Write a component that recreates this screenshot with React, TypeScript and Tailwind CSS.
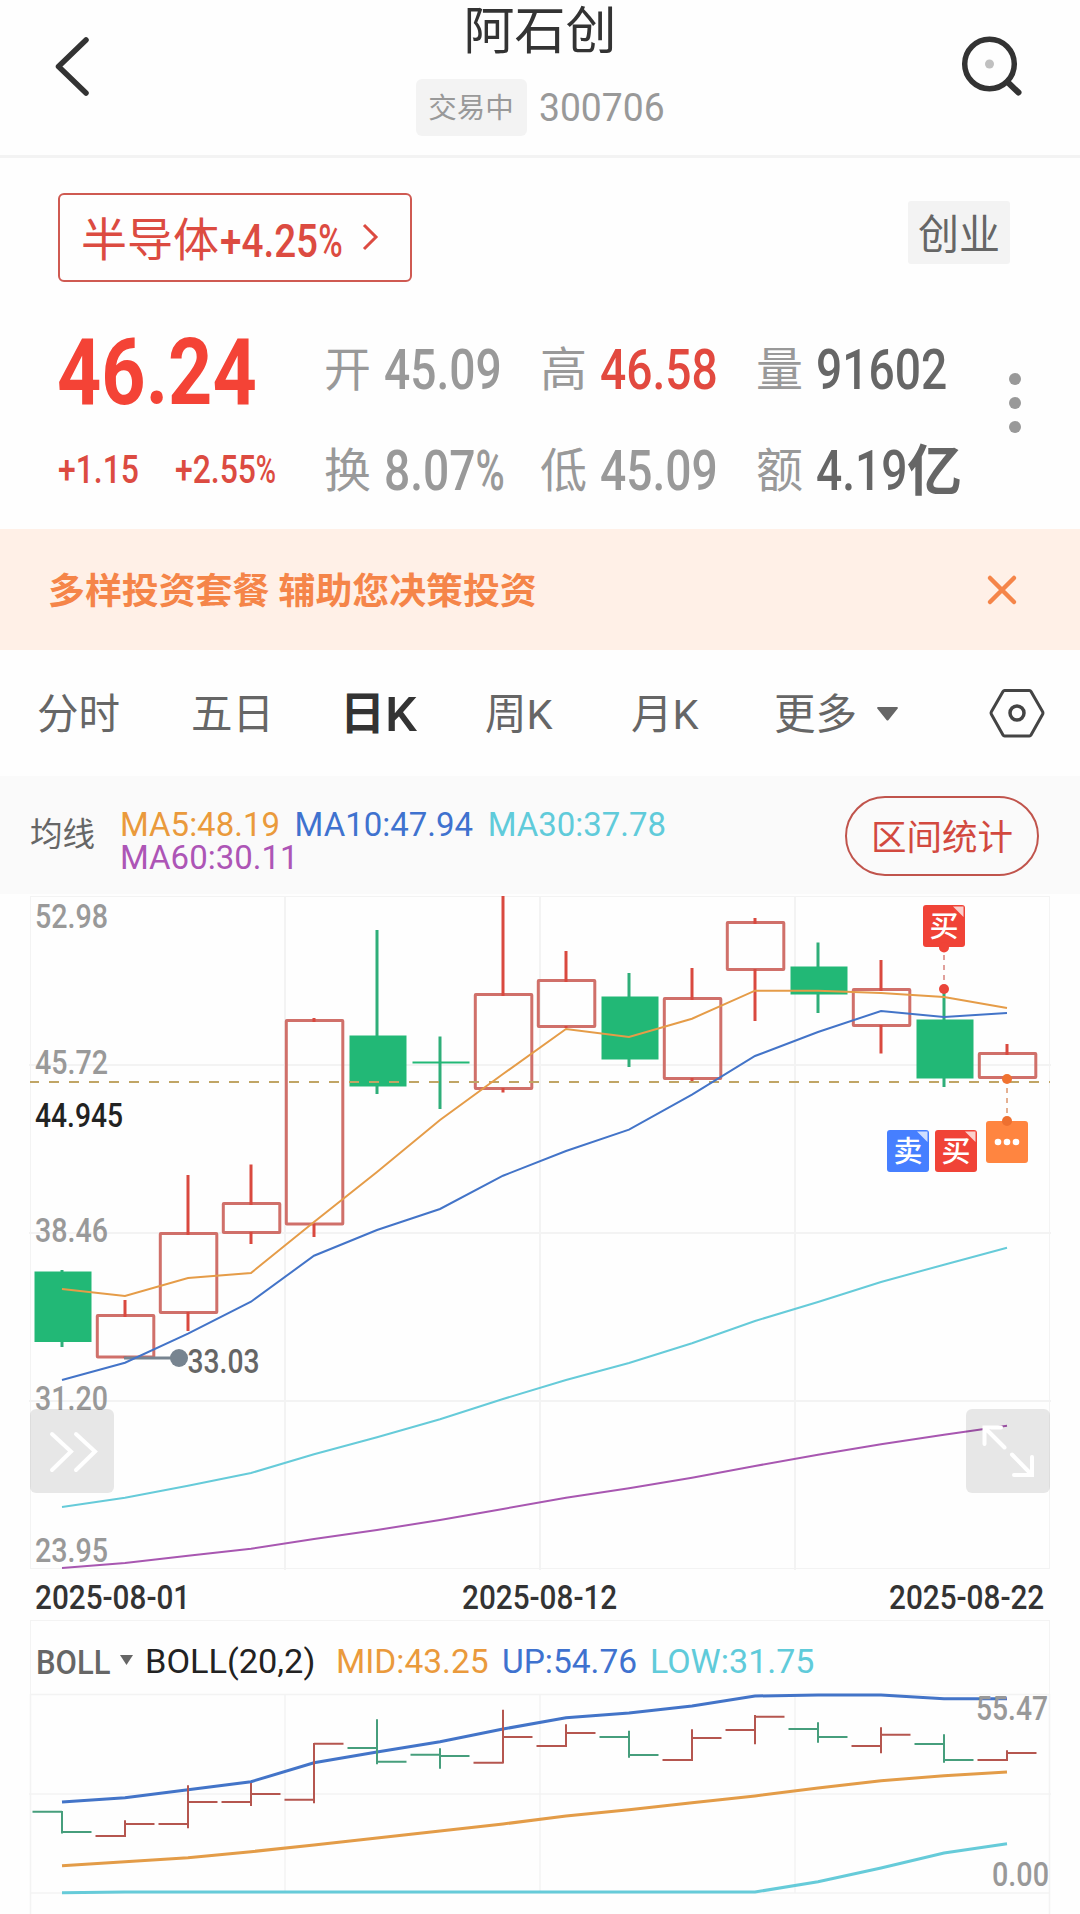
import type { ReactNode } from 'react';

const UP = '#d9493f';
const UP_BODY = '#d0706a';
const DOWN = '#2fae79';
const DOWN_BODY = '#22b876';
const GRID = '#f3f3f3';

const MA5 = '#e59c48';
const MA10 = '#4374c8';
const MA30 = '#66cbd9';
const MA60 = '#a857b1';

const STEP = 63;
const FIRST = 62;
const cx = (i: number) => FIRST + STEP * i;

type Candle = { up: boolean; top: number; bottom: number; high: number; low: number };

const CANDLES: Candle[] = [
  { up: false, top: 1271.5, bottom: 1342, high: 1270, low: 1347 },
  { up: true, top: 1314, bottom: 1358.5, high: 1300, low: 1358 },
  { up: true, top: 1232, bottom: 1314, high: 1175, low: 1331 },
  { up: true, top: 1202, bottom: 1234, high: 1164.5, low: 1244 },
  { up: true, top: 1019, bottom: 1225.5, high: 1018, low: 1237 },
  { up: false, top: 1035.5, bottom: 1086.5, high: 930, low: 1094 },
  { up: false, top: 1061.5, bottom: 1063.5, high: 1036.5, low: 1109 },
  { up: true, top: 993, bottom: 1090, high: 896, low: 1092.5 },
  { up: true, top: 979, bottom: 1028, high: 951, low: 1028 },
  { up: false, top: 996.5, bottom: 1059.5, high: 973, low: 1067 },
  { up: true, top: 997, bottom: 1080, high: 968, low: 1082 },
  { up: true, top: 921, bottom: 971, high: 918, low: 1021 },
  { up: false, top: 966.5, bottom: 994.5, high: 942.5, low: 1013 },
  { up: true, top: 988, bottom: 1027, high: 960, low: 1053.5 },
  { up: false, top: 1019.5, bottom: 1078.5, high: 989, low: 1087 },
  { up: true, top: 1052, bottom: 1079, high: 1044, low: 1079 },
];

const MA_LINES = [
  {
    color: MA30,
    ys: [1507, 1497.7, 1485.7, 1473, 1454.3, 1437.3, 1419.3, 1399, 1380, 1363, 1343.3, 1321, 1302, 1282, 1264.7, 1247.7],
  },
  {
    color: MA60,
    ys: [1568, 1563, 1555.7, 1548.7, 1539, 1530, 1520, 1509, 1497.7, 1488.3, 1477.7, 1466, 1454.7, 1444.3, 1434.7, 1425.7],
  },
  {
    color: MA10,
    ys: [1380, 1362.7, 1333.7, 1301.7, 1255.7, 1230, 1209, 1175.7, 1151, 1129.7, 1094.7, 1056, 1032, 1011, 1017, 1013],
  },
  {
    color: MA5,
    ys: [1289, 1296, 1278, 1273, 1222, 1172, 1120, 1074, 1029, 1037, 1018.7, 990.7, 990.7, 993, 997, 1008],
  },
];

// up, open, close, high, low
const BARS: [boolean, number, number, number, number][] = [
  [false, 1811.7, 1832, 1811, 1833.5],
  [true, 1836, 1824, 1820.3, 1837],
  [true, 1824, 1802, 1785.3, 1828.3],
  [true, 1802, 1794, 1783, 1806],
  [true, 1799.7, 1743.7, 1743, 1803.3],
  [false, 1748, 1761.7, 1719.3, 1764.3],
  [false, 1754.7, 1756, 1748.3, 1768.7],
  [true, 1762.7, 1737, 1709.7, 1763.5],
  [true, 1746, 1733, 1724.3, 1747],
  [false, 1737, 1755, 1730.7, 1757.7],
  [true, 1760, 1738, 1729.3, 1761],
  [true, 1730, 1716.7, 1715, 1744.3],
  [false, 1729, 1737, 1722.3, 1742.7],
  [true, 1746, 1734.7, 1727.3, 1753.3],
  [false, 1744, 1760, 1734.3, 1762.7],
  [true, 1760, 1753, 1750.3, 1761],
];

const BOLL_LINES = [
  {
    color: '#4374c8',
    ys: [1802, 1797.7, 1789.7, 1781.7, 1762.7, 1752, 1741.7, 1729, 1717.7, 1713, 1706, 1696, 1695, 1695, 1698.7, 1698.7],
  },
  {
    color: '#e39c48',
    ys: [1865.7, 1861.7, 1857.7, 1851.7, 1845, 1838, 1831, 1824, 1816, 1809.7, 1802.7, 1796, 1788, 1780.7, 1775.7, 1772],
  },
  {
    color: '#66cbd9',
    ys: [1892.7, 1892, 1892, 1892, 1892, 1892, 1892, 1892, 1892, 1892, 1892, 1892, 1881.7, 1868, 1853, 1843.7],
  },
];

const AXIS = [
  { text: '52.98', y: 928, width: 73, color: '#999' },
  { text: '45.72', y: 1074, width: 73, color: '#999' },
  { text: '44.945', y: 1127, width: 88, color: '#222' },
  { text: '38.46', y: 1241.5, width: 73, color: '#999' },
  { text: '31.20', y: 1410, width: 73, color: '#999' },
  { text: '23.95', y: 1562, width: 73, color: '#999' },
];

const points = (ys: number[]) => ys.map((y, i) => `${cx(i)},${y}`).join(' ');

function Narrow({ className = '', children }: { className?: string; children: ReactNode }) {
  return (
    <span className={`inline-block origin-left scale-x-[0.84] whitespace-nowrap ${className}`}>{children}</span>
  );
}

// the percent sign is set narrower than the digits
function Percent() {
  return <span className="inline-block w-[0.66em] origin-left scale-x-[0.86]">%</span>;
}

function Stat({ label, className, children }: { label: string; className: string; children: ReactNode }) {
  return (
    <div className="flex h-[101px] items-center">
      <span className="w-[60px] shrink-0 text-[47px] leading-none text-[#999]">{label}</span>
      <div className={`flex w-[150px] items-center pt-[2px] text-[55px] leading-none font-medium ${className}`}>
        {children}
      </div>
    </div>
  );
}

function Header() {
  return (
    <header className="flex h-[158px] justify-between border-b-[3px] border-[#f3f3f3] px-[55px]">
      <svg className="mt-9 h-[60px] w-[36px]" viewBox="0 0 36 60" fill="none">
        <path d="M31 4 3.5 30.5 31 57" stroke="#333" strokeWidth="5.5" strokeLinecap="round" strokeLinejoin="round" />
      </svg>
      <div className="ml-[28px] flex flex-col items-center">
        <h1 className="pt-1 text-[51px] leading-[56px] text-[#333]">阿石创</h1>
        <div className="mt-[19px] flex items-center gap-3 text-[#999]">
          <span className="flex h-[57px] w-[111px] items-center justify-center rounded-[6px] bg-[#f3f3f3] pt-1 text-[28.5px] leading-none">
            交易中
          </span>
          <span className="w-[126px] origin-left scale-x-[0.98] pt-px text-[38px] leading-none">300706</span>
        </div>
      </div>
      <svg className="mt-9 mr-[2px] h-[62px] w-[62px]" viewBox="961 36 62 62" fill="none">
        <circle cx="989.5" cy="64" r="24.8" stroke="#333" strokeWidth="5.5" />
        <path d="m1007.5 82 11 10.5" stroke="#333" strokeWidth="6" strokeLinecap="round" />
        <circle cx="989.5" cy="64" r="4.5" fill="#c0c0c0" />
      </svg>
    </header>
  );
}

function Quote() {
  return (
    <section>
      <div className="flex h-[161px] justify-between pt-[35px] pr-[70px] pl-[58px]">
        <div className="flex h-[89px] w-[354px] items-center rounded-[6px] border-2 border-[#cf5a52] pl-[21px] text-[#dc4b41]">
          <span className="w-[139px] pt-1 text-[46px] leading-none">半导体</span>
          <Narrow className="mt-[6px] w-[140px] text-[46px] leading-none font-medium">
            +4.25
            <Percent />
          </Narrow>
          <svg className="-mt-px h-[30px] w-[20px]" viewBox="0 0 20 30" fill="none">
            <path d="m4 3 12 12L4 27" stroke="currentColor" strokeWidth="3" />
          </svg>
        </div>
        <span className="mt-2 flex h-[63px] w-[102px] items-center justify-center rounded-[3px] bg-[#f3f3f3] pt-[5px] text-[41px] leading-none text-[#666]">
          创业
        </span>
      </div>
      <div className="flex h-[210px] pl-[57px]">
        <div className="w-[267px] text-[#dc4b41]">
          <div className="flex h-[104px] items-center pt-1">
            <Narrow className="text-[92px] leading-none font-bold text-[#f44336]">46.24</Narrow>
          </div>
          <div className="flex h-[94px] items-center pl-px text-[38px] leading-none font-medium">
            <Narrow className="w-[117px]">+1.15</Narrow>
            <Narrow>
              +2.55
              <Percent />
            </Narrow>
          </div>
        </div>
        <div className="grid h-[202px] grid-cols-[216px_216px_216px]">
          <Stat label="开" className="text-[#999]">
            <Narrow>45.09</Narrow>
          </Stat>
          <Stat label="高" className="text-[#e2493f]">
            <Narrow>46.58</Narrow>
          </Stat>
          <Stat label="量" className="text-[#666]">
            <Narrow>91602</Narrow>
          </Stat>
          <Stat label="换" className="text-[#999]">
            <Narrow>
              8.07
              <Percent />
            </Narrow>
          </Stat>
          <Stat label="低" className="text-[#999]">
            <Narrow>45.09</Narrow>
          </Stat>
          <Stat label="额" className="text-[#666]">
            <Narrow className="w-[91px] shrink-0">4.19</Narrow>
            <span className="text-[55px] font-bold">亿</span>
          </Stat>
        </div>
        <div className="mt-[54px] ml-[37px] flex flex-col gap-3">
          <i className="size-3 rounded-full bg-[#999]" />
          <i className="size-3 rounded-full bg-[#999]" />
          <i className="size-3 rounded-full bg-[#999]" />
        </div>
      </div>
    </section>
  );
}

function Banner() {
  return (
    <div className="flex h-[121px] items-center justify-between bg-[#fff0e7] pr-[62px] pl-12 text-[#f58549]">
      <p className="pt-[5px] text-[36.9px] leading-none font-bold">多样投资套餐 辅助您决策投资</p>
      <svg className="h-[32px] w-[32px]" viewBox="0 0 32 32" fill="none">
        <path d="m4 4 24 24M28 4 4 28" stroke="currentColor" strokeWidth="4.5" strokeLinecap="round" />
      </svg>
    </div>
  );
}

function Tabs() {
  return (
    <nav className="flex h-[126px] items-center pl-[37px] text-[41.5px] leading-none text-[#666]">
      <span className="w-[154px] pt-[3px]">分时</span>
      <span className="w-[149px] pt-[3px]">五日</span>
      <span className="flex w-[145px] pt-[3px] text-[45px] font-bold text-[#333]">
        日<span className="origin-left scale-x-[1.05] text-[48px] leading-[45px] font-medium">K</span>
      </span>
      <span className="w-[146px] pt-[3px]">周K</span>
      <span className="w-[143px] pt-[3px]">月K</span>
      <span className="w-[103px] pt-[3px]">更多</span>
      <svg className="mt-[2px] h-[14px] w-[21px]" viewBox="0 0 21 14">
        <path d="M1 0h19a1 1 0 0 1 .7 1.6L11.5 13a1.4 1.4 0 0 1-2 0L.3 1.6A1 1 0 0 1 1 0Z" fill="#666" />
      </svg>
      <svg className="ml-[90px] h-[52px] w-[58px]" viewBox="988 687 58 52" fill="none" stroke="#444" strokeWidth="3">
        <path d="M1005 690.5h24a2 2 0 0 1 2 1l11.5 20a3 3 0 0 1 0 3L1031 735a2 2 0 0 1-2 1h-24a2 2 0 0 1-2-1l-11.5-20.5a3 3 0 0 1 0-3l11.5-20a2 2 0 0 1 2-1Z" />
        <circle cx="1017" cy="713" r="7" strokeWidth="3.5" />
      </svg>
    </nav>
  );
}

function Averages() {
  return (
    <div className="flex h-[118px] items-center bg-[#fafafa] pl-[30px]">
      <span className="w-[90px] text-[32.5px] leading-none text-[#666]">均线</span>
      <div className="mt-[11px] w-[725px] text-[34px] leading-[33px]">
        <div className="flex origin-left scale-x-[0.97]">
          <span className="w-[180px] text-[#ea9a3c]">MA5:48.19</span>
          <span className="w-[199px] text-[#3f72cf]">MA10:47.94</span>
          <span className="text-[#60cbda]">MA30:37.78</span>
        </div>
        <div className="origin-left scale-x-[0.97] text-[#ad55b6]">MA60:30.11</div>
      </div>
      <button className="mt-[2px] h-[80px] w-[194px] rounded-full border-2 border-[#c0544c] pt-[5px] text-[35.5px] leading-none text-[#d2493f]">
        区间统计
      </button>
    </div>
  );
}

function Flag({ x, y, fill, text }: { x: number; y: number; fill: string; text: string }) {
  return (
    <g transform={`translate(${x} ${y})`}>
      <rect width="42" height="42" rx="3" fill={fill} />
      <path d="M30 1.5h10.5V12Z" fill="#fff" opacity="0.75" />
      <text x="21" y="32" textAnchor="middle" fontSize="29" fontWeight="500" fill="#fff">
        {text}
      </text>
    </g>
  );
}

function PriceChart() {
  return (
    <div className="relative h-[681px]">
      <svg className="block h-[681px] w-[1080px]" viewBox="0 894 1080 681" fill="none">
        <rect x="30.5" y="896.5" width="1019" height="672" stroke={GRID} />
        <path d="M285 896v674M540 896v674M795 896v674M29 1065h1022M29 1233h1022M29 1401h1022" stroke={GRID} strokeWidth="2" />

        {AXIS.map((a) => (
          <text key={a.text} x="35" y={a.y} fontSize="33" fontWeight="500" fill={a.color} textLength={a.width} lengthAdjust="spacingAndGlyphs">
            {a.text}
          </text>
        ))}

        {CANDLES.map((c, i) =>
          c.up ? (
            <g key={i}>
              <rect x={cx(i) - 27.7} y={c.top + 1.5} width="56.5" height={c.bottom - c.top - 3} rx="0.5" stroke={UP_BODY} strokeWidth="3" />
              <path d={`M${cx(i)} ${c.high}V${c.top + 3}M${cx(i)} ${c.bottom - 2}V${c.low}`} stroke={UP} strokeWidth="3" />
            </g>
          ) : (
            <g key={i}>
              <path d={`M${cx(i)} ${c.high}V${c.low}`} stroke={DOWN} strokeWidth="3" />
              <rect x={cx(i) - 27.5} y={c.top} width="57" height={c.bottom - c.top} fill={DOWN_BODY} />
            </g>
          ),
        )}

        <path d="M30 1082h1020" stroke="#c0a565" strokeWidth="2" strokeDasharray="10 10" strokeDashoffset="1" />

        <path d="M124 1358h50" stroke="#778490" strokeWidth="3" />
        <circle cx="179" cy="1358" r="9" fill="#778490" />
        <text x="187.5" y="1373" fontSize="33" fontWeight="500" fill="#666" textLength="72" lengthAdjust="spacingAndGlyphs">
          33.03
        </text>

        {MA_LINES.map((l) => (
          <polyline key={l.color} points={points(l.ys)} stroke={l.color} strokeWidth="2" />
        ))}

        <Flag x={923} y={905} fill="#f04337" text="买" />
        <path d="M944 955v28" stroke="#e0a09b" strokeWidth="2" strokeDasharray="5 5" />
        <circle cx="944" cy="947.5" r="5" fill="#f04337" />
        <circle cx="944" cy="989" r="5" fill="#ea453a" />

        <Flag x={887} y={1130} fill="#467fff" text="卖" />
        <Flag x={935} y={1130} fill="#f04337" text="买" />

        <rect x="986" y="1121" width="42" height="42" rx="3" fill="#ff8540" />
        <circle cx="998" cy="1142" r="3.3" fill="#fff" />
        <circle cx="1007" cy="1142" r="3.3" fill="#fff" />
        <circle cx="1016" cy="1142" r="3.3" fill="#fff" />
        <path d="M1007 1088v28" stroke="#e5b091" strokeWidth="2" strokeDasharray="5 5" />
        <circle cx="1007" cy="1079" r="5" fill="#f07230" />
        <circle cx="1007" cy="1121" r="5" fill="#ee7030" />
      </svg>

      <button className="absolute top-[515px] left-[30px] size-[84px] rounded-[6px] bg-black/9">
        <svg viewBox="30 1409 84 84" fill="none" stroke="#fff" strokeWidth="4" strokeLinecap="round">
          <path d="m52 1434 19 17.5L52 1470M76 1434l19 17.5L76 1470" />
        </svg>
      </button>
      <button className="absolute top-[515px] left-[966px] size-[84px] rounded-[6px] bg-black/9">
        <svg viewBox="966 1409 84 84" fill="none" stroke="#fff" strokeWidth="4" strokeLinecap="round">
          <path d="M984.5 1444v-16.5H1001M984.5 1427.5l20 20M1032 1457v18h-18M1032 1475l-20-20.500" />
        </svg>
      </button>
    </div>
  );
}

function Dates() {
  return (
    <div className="flex h-[45px] items-center justify-between pr-[37px] pl-[35px] text-[33px] leading-none font-medium text-[#333]">
      <span className="w-[153px] origin-left scale-x-[0.9] whitespace-nowrap">2025-08-01</span>
      <span className="w-[154px] origin-left scale-x-[0.9] whitespace-nowrap">2025-08-12</span>
      <span className="w-[154px] origin-left scale-x-[0.9] whitespace-nowrap">2025-08-22</span>
    </div>
  );
}

function Boll() {
  return (
    <section className="h-[294px]">
      <div className="mr-[30px] ml-[30px] flex h-[74px] items-center border border-b-0 border-[#f3f3f3] pt-[6px] pl-[5px] text-[34px] leading-none whitespace-nowrap">
        <span className="mt-[4px] w-[84px] text-[33px] font-medium text-[#666]">
          <span className="inline-block origin-left scale-x-[0.94]">BOLL</span>
        </span>
        <svg className="-mt-px mr-3 h-[10px] w-[13px]" viewBox="0 0 13 10">
          <path d="M0 0h13L6.500 10Z" fill="#666" />
        </svg>
        <span className="w-[191px] text-[#222]">
          <span className="inline-block origin-left scale-x-[1.01]">BOLL(20,2)</span>
        </span>
        <span className="w-[166px] text-[#ea9a3c]">
          <span className="inline-block origin-left scale-x-[0.985]">MID:43.25</span>
        </span>
        <span className="w-[148px] text-[#3f72cf]">
          <span className="inline-block origin-left scale-x-[0.985]">UP:54.76</span>
        </span>
        <span className="text-[#60cbda]">LOW:31.75</span>
      </div>
      <svg className="block h-[220px] w-[1080px] overflow-visible" viewBox="0 1694 1080 220" fill="none">
        <path d="M30.5 1694v220M1049.5 1694v220M30 1694.5h1020M285 1694v199M540 1694v199M795 1694v199M29 1794h1022M30 1893h1020" stroke={GRID} strokeWidth="1.5" />
        {BOLL_LINES.map((l) => (
          <polyline key={l.color} points={points(l.ys)} stroke={l.color} strokeWidth="3" />
        ))}
        {BARS.map(([up, open, close, high, low], i) => (
          <path
            key={i}
            d={`M${cx(i) - 29.5} ${open}H${cx(i)}M${cx(i)} ${high}V${low}M${cx(i)} ${close}h29.500`}
            stroke={up ? '#b5564f' : '#469e7c'}
            strokeWidth="2"
          />
        ))}
        <text x="976" y="1720" fontSize="33" fontWeight="500" fill="#999" textLength="72" lengthAdjust="spacingAndGlyphs">
          55.47
        </text>
        <text x="992" y="1885.5" fontSize="33" fontWeight="500" fill="#999" textLength="57" lengthAdjust="spacingAndGlyphs">
          0.00
        </text>
      </svg>
    </section>
  );
}

export default function App() {
  return (
    <main className="h-[1914px] w-[1080px] overflow-hidden bg-[#fefefe] font-['Roboto','Noto_Sans_CJK_SC',sans-serif]">
      <Header />
      <Quote />
      <Banner />
      <Tabs />
      <Averages />
      <PriceChart />
      <Dates />
      <Boll />
    </main>
  );
}
